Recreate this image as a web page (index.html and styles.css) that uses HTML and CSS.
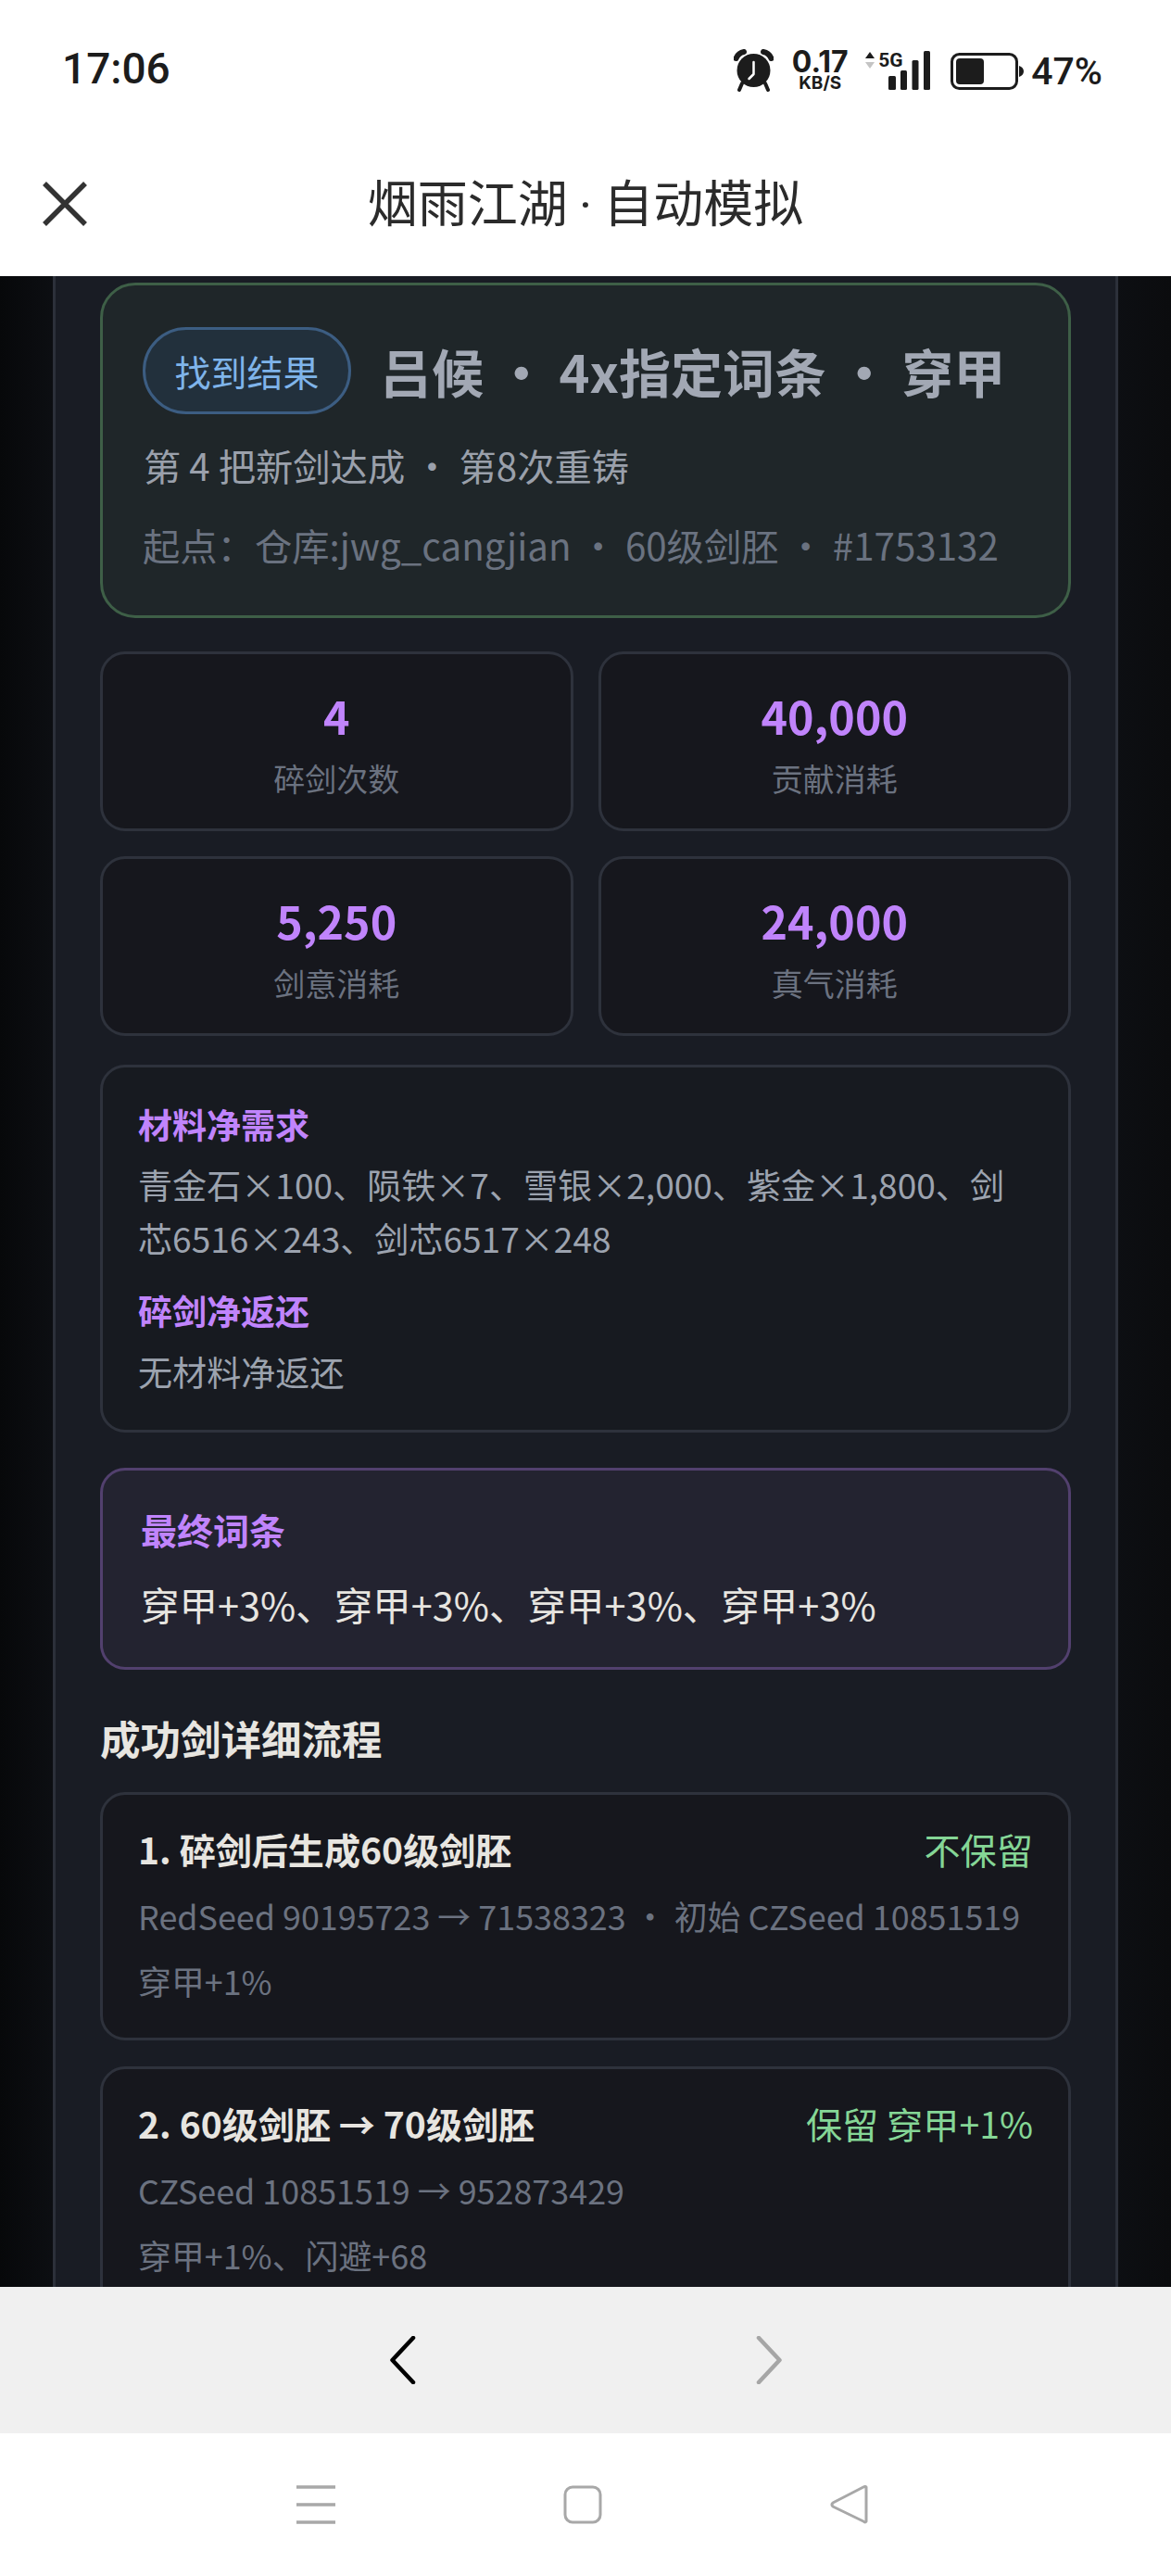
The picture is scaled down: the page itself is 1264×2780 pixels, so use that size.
FILE: index.html
```html
<!DOCTYPE html>
<html lang="zh-CN">
<head>
    <meta charset="UTF-8">
    <title>烟雨江湖 · 自动模拟</title>
    <link rel="stylesheet" href="styles.css">
</head>
<body>
    <div class="phone">
        <div class="status-bar">
            <span class="time">17:06</span>
            <div class="status-icons">
                <svg class="alarm" width="43" height="46" viewBox="0 0 43 46">
                    <circle cx="21.5" cy="23" r="18" fill="#1c1c1c"/>
                    <path d="M2.5 10 Q5 4 11 3 M40.5 10 Q38 4 32 3" fill="none" stroke="#1c1c1c" stroke-width="6" stroke-linecap="round"/>
                    <path d="M9 37 L6 44 M34 37 L37 44" stroke="#1c1c1c" stroke-width="4" stroke-linecap="round"/>
                    <path d="M21.5 14 V27 L16.5 32" fill="none" stroke="#fff" stroke-width="2.5" stroke-linecap="round" stroke-linejoin="round"/>
                </svg>
                <div class="speed">
                    <span class="speed-num">0.17</span>
                    <span class="speed-unit">KB/S</span>
                </div>
                <div class="signal">
                    <svg class="arrows" width="12" height="20" viewBox="0 0 12 20">
                        <path d="M6 1 L11 8 H1 Z" fill="#1c1c1c"/>
                        <path d="M6 19 L11 12 H1 Z" fill="#c4c4c4"/>
                    </svg>
                    <span class="net">5G</span>
                    <svg class="bars" width="45" height="42" viewBox="0 0 45 42">
                        <rect x="0" y="27" width="8" height="15" rx="1.5"/>
                        <rect x="13" y="21" width="7" height="21" rx="1.5"/>
                        <rect x="25.500" y="10" width="7" height="32" rx="1.5"/>
                        <rect x="38" y="0" width="7" height="42" rx="1.5"/>
                    </svg>
                </div>
                <svg class="battery" width="79" height="40" viewBox="0 0 79 40">
                    <rect x="1.5" y="1.5" width="70" height="37" rx="8" fill="none" stroke="#1c1c1c" stroke-width="3"/>
                    <rect x="6" y="6" width="30" height="28" rx="4" fill="#1c1c1c"/>
                    <path d="M74 14 C77 15 79 17 79 20 C79 23 77 25 74 26 Z" fill="#1c1c1c"/>
                </svg>
                <span class="percent">47%</span>
            </div>
        </div>

        <div class="title-bar">
            <svg class="close" width="50" height="50" viewBox="0 0 50 50">
                <path d="M3 3 L47 47 M47 3 L3 47" stroke="#333" stroke-width="5.5" fill="none"/>
            </svg>
            <h1>烟雨江湖 <span class="dot">·</span> 自动模拟</h1>
        </div>

        <div class="viewport">
            <div class="panel">
                <div class="hero">
                    <div class="hero-top">
                        <span class="badge">找到结果</span>
                        <span class="hero-title">吕候 ・ 4x指定词条 ・ 穿甲</span>
                    </div>
                    <div class="hero-sub">第 4 把新剑达成 ・ 第8次重铸</div>
                    <div class="hero-origin">起点：仓库:jwg_cangjian ・ 60级剑胚 ・ #1753132</div>
                </div>

                <div class="stats">
                    <div class="stat"><div class="stat-value">4</div><div class="stat-label">碎剑次数</div></div>
                    <div class="stat"><div class="stat-value">40,000</div><div class="stat-label">贡献消耗</div></div>
                    <div class="stat"><div class="stat-value">5,250</div><div class="stat-label">剑意消耗</div></div>
                    <div class="stat"><div class="stat-value">24,000</div><div class="stat-label">真气消耗</div></div>
                </div>

                <div class="materials">
                    <div class="mat-title">材料净需求</div>
                    <div class="mat-text">青金石×100、陨铁×7、雪银×2,000、紫金×1,800、剑芯6516×243、剑芯6517×248</div>
                    <div class="mat-title mat-second">碎剑净返还</div>
                    <div class="mat-text">无材料净返还</div>
                </div>

                <div class="final">
                    <div class="final-title">最终词条</div>
                    <div class="final-text">穿甲+3%、穿甲+3%、穿甲+3%、穿甲+3%</div>
                </div>

                <h2>成功剑详细流程</h2>

                <div class="step">
                    <div class="step-head">
                        <span class="step-name">1. 碎剑后生成60级剑胚</span>
                        <span class="step-keep">不保留</span>
                    </div>
                    <div class="step-seed">RedSeed 90195723 → 71538323 ・ 初始 CZSeed 10851519</div>
                    <div class="step-seed">穿甲+1%</div>
                </div>

                <div class="step">
                    <div class="step-head">
                        <span class="step-name">2. 60级剑胚 → 70级剑胚</span>
                        <span class="step-keep">保留 穿甲+1%</span>
                    </div>
                    <div class="step-seed">CZSeed 10851519 → 952873429</div>
                    <div class="step-seed">穿甲+1%、闪避+68</div>
                </div>
            </div>
        </div>

        <div class="browser-nav">
            <svg width="29" height="52" viewBox="0 0 29 52">
                <path d="M26 2 L3.500 26 L26 50" fill="none" stroke="#000" stroke-width="4.5" stroke-linecap="round" stroke-linejoin="round"/>
            </svg>
            <svg width="29" height="52" viewBox="0 0 29 52">
                <path d="M3 2 L25.500 26 L3 50" fill="none" stroke="#a6a6a6" stroke-width="4.5" stroke-linecap="round" stroke-linejoin="round"/>
            </svg>
        </div>

        <div class="system-nav">
            <svg width="42" height="42" viewBox="0 0 42 42">
                <path d="M0 2 H42 M0 21 H42 M0 40 H42" stroke="#a8a8a8" stroke-width="3.5" fill="none"/>
            </svg>
            <svg width="42" height="42" viewBox="0 0 42 42">
                <rect x="2" y="2" width="38" height="38" rx="8" fill="none" stroke="#a8a8a8" stroke-width="3"/>
            </svg>
            <svg width="42" height="42" viewBox="0 0 42 42">
                <path d="M39 2 V39 Q38 41 36 39 L3 23 Q1 21 3 19 L36 2 Q38 1 39 2 Z" fill="none" stroke="#a8a8a8" stroke-width="3" stroke-linejoin="round"/>
            </svg>
        </div>
    </div>
</body>
</html>
```

FILE: styles.css
```css
* {
    box-sizing: border-box;
}
html, body {
    margin: 0;
    padding: 0;
}
body {
    font-family: "Noto Sans CJK SC", "Noto Sans", sans-serif;
    background: #fff;
}
.phone {
    width: 1264px;
    height: 2780px;
    display: flex;
    flex-direction: column;
    overflow: hidden;
}

/* status bar */
.status-bar {
    height: 150px;
    padding: 46px 74px 0 67px;
    display: flex;
    justify-content: space-between;
    align-items: flex-start;
    background: #fff;
    color: #1c1c1c;
}
.time {
    font-family: Roboto, sans-serif;
    font-size: 46px;
    font-weight: 500;
    line-height: 56px;
}
.status-icons {
    display: flex;
    align-items: flex-start;
    margin-top: 7px;
}
.speed {
    margin-left: 20px;
    width: 60px;
    display: flex;
    flex-direction: column;
    align-items: center;
    font-family: Inter, sans-serif;
    font-weight: 700;
}
.speed-num {
    font-size: 32px;
    line-height: 28px;
}
.speed-unit {
    font-size: 19px;
    line-height: 18px;
}
.signal {
    margin-left: 18px;
    width: 71px;
    height: 44px;
    position: relative;
}
.arrows {
    position: absolute;
    left: 0;
    top: 2px;
}
.net {
    position: absolute;
    left: 15px;
    top: 0;
    font-family: Roboto, sans-serif;
    font-size: 21px;
    font-weight: 700;
    line-height: 24px;
}
.bars {
    position: absolute;
    left: 26px;
    top: 2px;
    fill: #1c1c1c;
}
.battery {
    margin-left: 22px;
    margin-top: 4px;
}
.percent {
    margin-left: 8px;
    margin-top: 1px;
    font-family: Roboto, sans-serif;
    font-size: 41px;
    font-weight: 500;
    line-height: 46px;
}

/* title bar */
.title-bar {
    height: 148px;
    position: relative;
    display: flex;
    align-items: center;
    justify-content: center;
    background: #fff;
}
.title-bar h1 {
    margin: 0;
    font-size: 54px;
    font-weight: 400;
    line-height: 60px;
    color: #2b2b2b;
    position: relative;
    top: -5px;
}
.dot {
    font-family: Roboto, sans-serif;
}
.close {
    position: absolute;
    left: 45px;
    top: 45px;
}

/* page content */
.viewport {
    flex: 1;
    min-height: 0;
    overflow: hidden;
    background: linear-gradient(90deg, #07080a, #0d0f13 5%, #0d0f13 95%, #0b0c0e);
}
.panel {
    width: 1150px;
    margin-left: 57px;
    padding: 7px 48px 0;
    background: #191c24;
    border-left: 3px solid #2c303a;
    border-right: 3px solid #2c303a;
    min-height: 100%;
}
.hero {
    height: 362px;
    padding: 45px 43px 0;
    background: #1f2629;
    border: 3px solid #3e5f47;
    border-radius: 38px;
}
.hero-top {
    display: flex;
    align-items: center;
}
.badge {
    width: 225px;
    height: 94px;
    flex: none;
    display: flex;
    align-items: center;
    justify-content: center;
    background: #22303c;
    border: 3px solid #3c5d82;
    border-radius: 47px;
    color: #7fb4ea;
    font-size: 39px;
    line-height: 1;
}
.hero-title {
    margin-left: 31px;
    font-size: 56px;
    font-weight: 700;
    color: #a2a8b4;
    white-space: nowrap;
    line-height: 70px;
}
.hero-sub {
    margin-top: 24px;
    margin-left: 1px;
    font-size: 40.3px;
    line-height: 62px;
    color: #9aa0ab;
}
.hero-origin {
    margin-top: 24px;
    font-size: 40.3px;
    line-height: 62px;
    color: #6a7280;
    white-space: nowrap;
}
.stats {
    margin-top: 36px;
    display: grid;
    grid-template-columns: 1fr 1fr;
    gap: 27px;
}
.stat {
    height: 194px;
    padding-top: 33px;
    background: #16171d;
    border: 3px solid #2e323c;
    border-radius: 27px;
    text-align: center;
}
.stat-value {
    font-size: 48.4px;
    font-weight: 700;
    line-height: 66px;
    color: #c084fc;
}
.stat-label {
    margin-top: 10px;
    font-size: 34px;
    line-height: 50px;
    color: #6b7280;
}
.materials {
    margin-top: 31px;
    height: 397px;
    padding: 36px 42px 0 38px;
    background: #171a20;
    border: 3px solid #2e323c;
    border-radius: 27px;
}
.mat-title {
    font-size: 37px;
    font-weight: 700;
    line-height: 50px;
    color: #c084fc;
}
.mat-second {
    margin-top: 24px;
}
.mat-text {
    margin-top: 11px;
    font-size: 37.1px;
    line-height: 58px;
    color: #9ca3af;
}
.mat-second + .mat-text {
    margin-top: 12px;
}
.final {
    margin-top: 38px;
    height: 218px;
    padding: 37px 41px 0;
    background: #232330;
    border: 3px solid #52406e;
    border-radius: 27px;
}
.final-title {
    font-size: 39px;
    font-weight: 700;
    line-height: 52px;
    color: #c084fc;
}
.final-text {
    margin-top: 27px;
    font-size: 41.5px;
    line-height: 56px;
    color: #e7e5e0;
}
.panel h2 {
    margin: 43px 0 27px;
    font-size: 43.5px;
    font-weight: 700;
    line-height: 62px;
    color: #e7e5e0;
}
.step {
    height: 268px;
    margin-bottom: 28px;
    padding: 30px 38px 0 38px;
    background: #16171d;
    border: 3px solid #2e323c;
    border-radius: 27px;
}
.step-head {
    display: flex;
    justify-content: space-between;
    align-items: center;
}
.step-name {
    font-size: 39.1px;
    font-weight: 700;
    line-height: 56px;
    color: #e7e5e0;
}
.step-keep {
    font-size: 39.2px;
    line-height: 56px;
    color: #85d696;
}
.step-seed {
    margin-top: 12px;
    font-size: 35.9px;
    line-height: 58px;
    color: #6b7280;
    white-space: nowrap;
}
.step-head + .step-seed {
    margin-top: 15px;
}

/* browser and system bars */
.browser-nav {
    height: 158px;
    flex: none;
    display: flex;
    align-items: center;
    justify-content: center;
    gap: 367px;
    background: #f0f0f0;
}
.system-nav {
    height: 154px;
    flex: none;
    padding-right: 7px;
    display: flex;
    align-items: center;
    justify-content: center;
    gap: 246px;
    background: #fff;
}
```
